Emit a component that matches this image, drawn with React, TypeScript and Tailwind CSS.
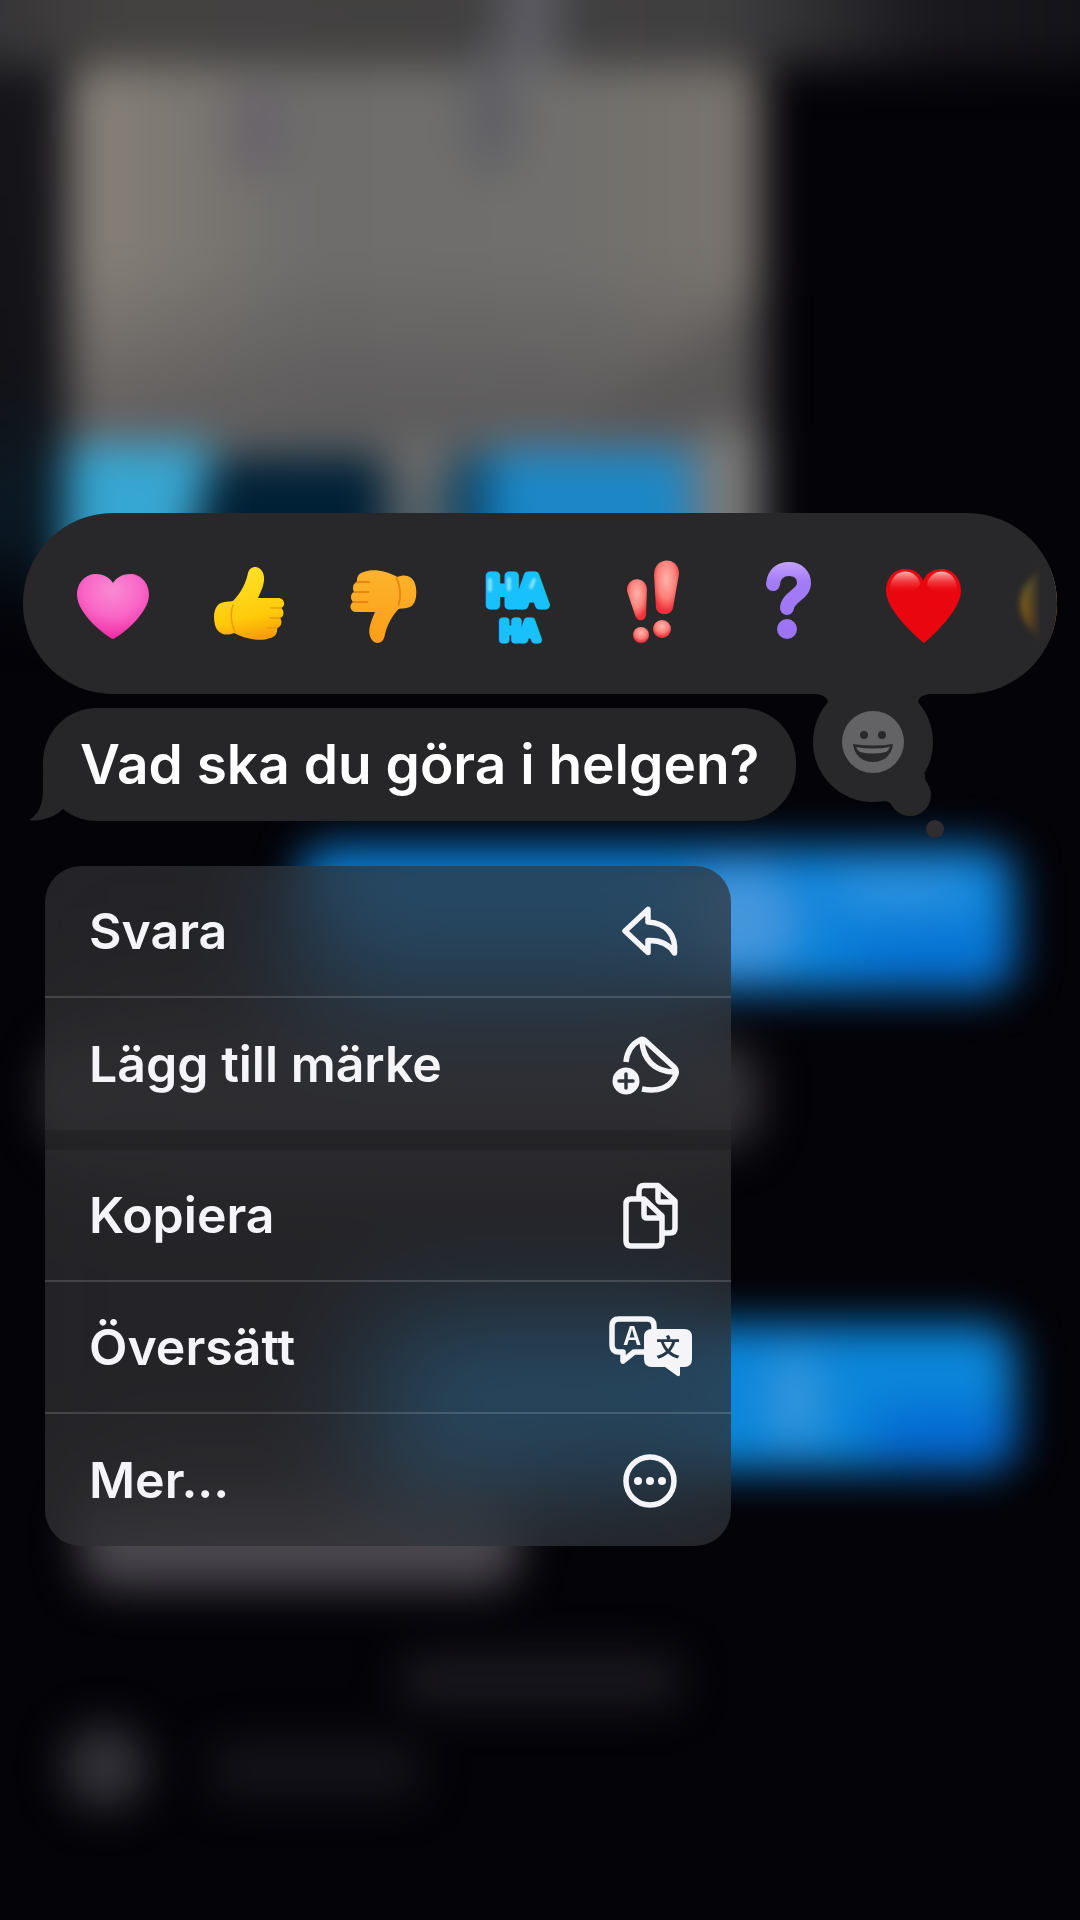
import type { ReactNode } from "react";

const THUMB =
  "M25 37 C34 28 38 18 40 9 C42 2 50 1 54 7 C59 15 54 25 50 34 L70 34 C77 34 78 42 73 44 C77 47 76 53 72 54 C75 58 73 63 69 64 C70 69 67 73 62 74 C52 78 38 75 26 69 C17 73 9 69 7 61 C5 53 6 44 11 40 C16 37 21 38 25 37 Z";

const HEART =
  "M40 75 C34 73 4 50 4 31 C4 18 13 10 23 10 C31 10 37 14 40 19 C43 14 49 10 57 10 C67 10 76 18 76 31 C76 50 46 73 40 75 Z";

function Emoji({ children }: { children: ReactNode }) {
  return (
    <svg viewBox="0 0 80 80" className="h-20 w-20 overflow-visible" aria-hidden="true">
      {children}
    </svg>
  );
}

const reactions = [
  {
    label: "Rosa hjärta",
    art: (
      <Emoji>
        <defs>
          <radialGradient id="pink" cx="0.5" cy="0.25" r="0.8">
            <stop offset="0" stopColor="#f98ad2" />
            <stop offset="0.5" stopColor="#f966c6" />
            <stop offset="1" stopColor="#f2209f" />
          </radialGradient>
        </defs>
        <path d={HEART} fill="url(#pink)" />
      </Emoji>
    ),
  },
  {
    label: "Tumme upp",
    art: (
      <Emoji>
        <defs>
          <linearGradient id="up" x1="0.3" y1="0" x2="0.5" y2="1">
            <stop offset="0" stopColor="#ffe22a" />
            <stop offset="0.7" stopColor="#ffcb0a" />
            <stop offset="1" stopColor="#f99d08" />
          </linearGradient>
        </defs>
        <path d={THUMB} fill="url(#up)" />
        <path
          d="M73 44 H63 M72 54 H62 M69 64 H60 M25 41 C22 49 23 60 27 68"
          fill="none"
          stroke="#ee9a0a"
          strokeWidth="1.5"
          strokeLinecap="round"
        />
      </Emoji>
    ),
  },
  {
    label: "Tumme ner",
    art: (
      <Emoji>
        <defs>
          <linearGradient id="down" x1="0.5" y1="0" x2="0.5" y2="1">
            <stop offset="0" stopColor="#fd9d18" />
            <stop offset="1" stopColor="#fcb42c" />
          </linearGradient>
        </defs>
        <g transform="translate(79 82) rotate(180) scale(0.94 1)">
          <path d={THUMB} fill="url(#down)" />
          <path
            d="M73 44 H58 M72 54 H57 M69 64 H56 M25 41 C22 49 23 60 27 68"
            fill="none"
            stroke="#e8860f"
            strokeWidth="2"
            strokeLinecap="round"
          />
        </g>
      </Emoji>
    ),
  },
  {
    label: "Haha",
    art: (
      <Emoji>
        <g
          fill="#25c8fe"
          stroke="#18c0fc"
          strokeLinejoin="round"
          textAnchor="middle"
          className="font-['Inter',sans-serif] font-semibold"
        >
          <text x="39" y="41" fontSize="40" strokeWidth="9">
            HA
          </text>
          <text x="42" y="76" fontSize="26" strokeWidth="7">
            HA
          </text>
        </g>
        <path
          d="M12 16 V26 M31 15 V25 M56 16 L53 23"
          stroke="#7be3ff"
          strokeWidth="4"
          strokeLinecap="round"
          className="blur-[1px]"
        />
      </Emoji>
    ),
  },
  {
    label: "Utropstecken",
    art: (
      <Emoji>
        <defs>
          <radialGradient id="bang" cx="0.5" cy="0.35" r="0.6">
            <stop offset="0" stopColor="#ffb3ad" />
            <stop offset="0.6" stopColor="#fb8079" />
            <stop offset="1" stopColor="#ef3038" />
          </radialGradient>
        </defs>
        <g fill="url(#bang)">
          <path d="M14 27 C13 12 34 11 34 26 L33 51 C32 58 24 58 22 51 Z" />
          <path d="M41 11 C41 -8 66 -8 66 10 L60 44 C58 52 45 52 43 44 Z" />
          <circle cx="28" cy="71" r="8" />
          <circle cx="49" cy="65" r="9" />
        </g>
      </Emoji>
    ),
  },
  {
    label: "Frågetecken",
    art: (
      <Emoji>
        <defs>
          <linearGradient id="ask" gradientUnits="userSpaceOnUse" x1="0" y1="-2" x2="0" y2="76">
            <stop offset="0" stopColor="#c3a2fb" />
            <stop offset="0.25" stopColor="#a47bf6" />
            <stop offset="1" stopColor="#9c72f6" />
          </linearGradient>
        </defs>
        <path
          d="M25 20 C26 9 33 5 41 5 C50 5 56 11 56 19 C56 31 40 32 39 44"
          fill="none"
          stroke="url(#ask)"
          strokeWidth="14"
          strokeLinecap="round"
        />
        <circle cx="39" cy="65" r="10" fill="url(#ask)" />
      </Emoji>
    ),
  },
  {
    label: "Rött hjärta",
    art: (
      <Emoji>
        <defs>
          <linearGradient id="shine" x1="0" y1="0" x2="0" y2="1">
            <stop offset="0" stopColor="#ffb5b5" />
            <stop offset="1" stopColor="#f0141c" stopOpacity="0" />
          </linearGradient>
        </defs>
        <path
          d="M41 79 C37 76 3 47 3 27 C3 13 12 5 22 5 C31 5 37 9 40 17 C43 9 50 5 58 5 C69 5 78 13 78 27 C78 47 45 76 41 79 Z"
          fill="#e9060f"
        />
        <path d="M7 26 C7 3 33 2 37 20 C36 29 8 32 7 26 Z" fill="url(#shine)" />
        <path d="M44 20 C48 2 74 3 74 26 C73 32 45 29 44 20 Z" fill="url(#shine)" />
      </Emoji>
    ),
  },
  {
    label: "Fler reaktioner",
    art: (
      <Emoji>
        <defs>
          <linearGradient id="peek" x1="0" y1="0" x2="0" y2="1">
            <stop offset="0" stopColor="#8f8a2c" />
            <stop offset="0.6" stopColor="#c07c0c" />
            <stop offset="1" stopColor="#8a560e" />
          </linearGradient>
        </defs>
        <circle cx="40" cy="40" r="37" fill="url(#peek)" className="blur-[3px]" />
      </Emoji>
    ),
  },
];

function MenuIcon({ children }: { children: ReactNode }) {
  return (
    <svg
      viewBox="0 0 84 84"
      className="h-[84px] w-[84px] flex-none overflow-visible"
      fill="none"
      stroke="currentColor"
      strokeWidth="5.5"
      strokeLinecap="round"
      strokeLinejoin="round"
      aria-hidden="true"
    >
      {children}
    </svg>
  );
}

const groups = [
  [
    {
      label: "Svara",
      icon: (
        <MenuIcon>
          <path d="M18 42 L41 20.5 V33 C60 34 69 46 67.5 64 C62 55 54 51 41 51.5 V63.5 Z" />
        </MenuIcon>
      ),
    },
    {
      label: "Lägg till märke",
      icon: (
        <MenuIcon>
          <path
            d="M19 40 C20 30 25 22 33 18 Q35.5 16.5 38 18.5 L67 45 Q70 48 69 52 C64 66 51 70 35 67"
            strokeLinecap="butt"
          />
          <path d="M35 19 C36 37 47 50 68 50" />
          <circle cx="19" cy="59" r="13.5" fill="currentColor" stroke="none" />
          <path d="M12 59 H26 M19 52 V66" stroke="#2f343c" strokeWidth="3.5" />
        </MenuIcon>
      ),
    },
  ],
  [
    {
      label: "Kopiera",
      icon: (
        <MenuIcon>
          <path d="M24 26 H37 L55 43 V68 Q55 73 50 73 H24 Q19 73 19 68 V31 Q19 26 24 26 Z" />
          <path d="M37 27 V42 Q37 45 40 45 H54" />
          <path d="M32 24 V18 Q32 12.5 37 12.5 H51 L68 28 V55 Q68 60 63 60 H57" />
          <path d="M51 14 V26 Q51 29 54 29 H67" />
        </MenuIcon>
      ),
    },
    {
      label: "Översätt",
      icon: (
        <MenuIcon>
          <path d="M38 47 H27 L16 56 V47 H12 Q5 47 5 40 V21 Q5 14 12 14 H40 Q47 14 47 21 V26" />
          <path
            d="M45 24 H77 Q85 24 85 32 V54 Q85 62 77 62 H73 V69 Q73 73 69 70 L58 62 H45 Q37 62 37 54 V32 Q37 24 45 24 Z"
            fill="currentColor"
            stroke="none"
          />
          <text
            x="25"
            y="40"
            fontSize="25"
            textAnchor="middle"
            fill="currentColor"
            stroke="none"
            className="font-['Inter',sans-serif] font-semibold"
          >
            A
          </text>
          <text
            x="61"
            y="51"
            fontSize="24"
            textAnchor="middle"
            fill="#26384a"
            stroke="none"
            className="font-['Noto_Sans_CJK_SC',sans-serif] font-bold"
          >
            文
          </text>
        </MenuIcon>
      ),
    },
    {
      label: "Mer...",
      icon: (
        <MenuIcon>
          <circle cx="43" cy="43" r="24" />
          <g fill="currentColor" stroke="none">
            <circle cx="31" cy="43" r="4" />
            <circle cx="43" cy="43" r="4" />
            <circle cx="55" cy="43" r="4" />
          </g>
        </MenuIcon>
      ),
    },
  ],
];

// The conversation behind the menu, out of focus
function BlurredChat() {
  return (
    <svg
      viewBox="0 0 1080 1920"
      preserveAspectRatio="none"
      className="absolute inset-0 h-full w-full"
      aria-hidden="true"
    >
      <defs>
        <filter
          id="soft"
          filterUnits="userSpaceOnUse"
          x="-100"
          y="-100"
          width="1280"
          height="2120"
          colorInterpolationFilters="sRGB"
        >
          <feGaussianBlur stdDeviation="22" />
        </filter>
        <linearGradient id="header" x1="0" y1="0" x2="1" y2="0">
          <stop offset="0" stopColor="#302f32" />
          <stop offset="0.15" stopColor="#444241" />
          <stop offset="0.65" stopColor="#403f40" />
          <stop offset="0.82" stopColor="#1a191e" />
          <stop offset="1" stopColor="#121117" />
        </linearGradient>
        <linearGradient id="photo" x1="0" y1="0" x2="1" y2="0">
          <stop offset="0" stopColor="#8a837b" />
          <stop offset="0.12" stopColor="#7f7a74" />
          <stop offset="0.35" stopColor="#6e6d6b" />
          <stop offset="0.7" stopColor="#706f6d" />
          <stop offset="1" stopColor="#7a746e" />
        </linearGradient>
        <linearGradient id="shade" x1="0" y1="0" x2="0" y2="1">
          <stop offset="0" stopColor="#555355" stopOpacity="0" />
          <stop offset="1" stopColor="#555355" stopOpacity="0.8" />
        </linearGradient>
        <linearGradient id="edge" x1="0" y1="0" x2="0" y2="1">
          <stop offset="0" stopColor="#17161b" />
          <stop offset="0.65" stopColor="#121217" />
          <stop offset="0.85" stopColor="#0a1a26" />
          <stop offset="1" stopColor="#040308" />
        </linearGradient>
      </defs>
      <g filter="url(#soft)">
        <rect x="-60" y="-60" width="130" height="680" fill="url(#edge)" />
        <rect x="-60" y="-60" width="1200" height="126" fill="url(#header)" />
        <rect x="500" y="-60" width="60" height="126" fill="#5c5c63" />
        <rect x="68" y="66" width="695" height="556" rx="20" fill="url(#photo)" />
        <ellipse cx="258" cy="130" rx="30" ry="50" fill="#68636a" />
        <ellipse cx="492" cy="110" rx="28" ry="65" fill="#5f5f65" />
        <path d="M763 290 L560 440 H763 Z" fill="#605c5a" />
        <rect x="68" y="260" width="695" height="180" fill="url(#shade)" />
        <path d="M66 444 H215 L165 622 H66 Z" fill="#36a6d2" />
        <path d="M215 455 H385 V622 H170 Z" fill="#002036" />
        <rect x="385" y="480" width="60" height="142" fill="#586268" />
        <path d="M450 455 H490 V622 H450 Z" fill="#063f62" />
        <rect x="488" y="450" width="205" height="172" fill="#1b87c6" />
        <rect x="704" y="430" width="59" height="192" fill="#7c7c7a" />
        <rect x="300" y="847" width="714" height="144" rx="30" fill="#0c82da" />
        <ellipse cx="740" cy="920" rx="60" ry="55" fill="#4496dc" />
        <ellipse cx="900" cy="890" rx="80" ry="18" fill="#3494de" />
        <ellipse cx="930" cy="955" rx="90" ry="18" fill="#046cd2" />
        <rect x="45" y="1040" width="715" height="110" rx="40" fill="#343338" />
        <rect x="375" y="1324" width="640" height="146" rx="30" fill="#0b86da" />
        <ellipse cx="795" cy="1400" rx="28" ry="50" fill="#3696dc" />
        <ellipse cx="940" cy="1435" rx="80" ry="28" fill="#0468d2" />
        <rect x="80" y="1490" width="438" height="98" rx="30" fill="#4a484e" />
        <rect x="400" y="1655" width="280" height="50" rx="20" fill="#1b1a20" />
        <circle cx="105" cy="1767" r="42" fill="#343339" />
        <rect x="210" y="1742" width="210" height="56" rx="20" fill="#15141a" />
      </g>
    </svg>
  );
}

function EmojiPickerButton() {
  return (
    <button
      type="button"
      aria-label="Välj emoji"
      className="absolute top-[169px] right-[107px] h-[160px] w-[150px]"
    >
      <svg viewBox="0 0 150 160" className="h-full w-full" aria-hidden="true">
        <g fill="#28282a">
          <path d="M16 12 Q27 13 28 20 L40 40 H105 L118 20 Q119 13 130 12 Z" />
          <circle cx="73" cy="60" r="60" />
          <circle cx="110" cy="113" r="21" />
          <path d="M84 119 Q90 119 94 126 L112 118 L128 102 Q124 98 125 92 L104 92 Z" />
        </g>
        <circle cx="135" cy="147" r="9" fill="#302c30" />
        <circle cx="73" cy="60" r="31" fill="#636365" />
        <g fill="#29292b">
          <circle cx="64" cy="53" r="4" />
          <circle cx="82" cy="53" r="4" />
          <path d="M53 62 Q73 65 93 62 C92 72 85 80 73 80 C61 80 54 72 53 62 Z" />
        </g>
        <path d="M56 65 Q73 68 90 65 Q89 68 86 70 Q73 73 60 70 Q57 68 56 65 Z" fill="#6c6c6e" />
      </svg>
    </button>
  );
}

export default function App() {
  return (
    <main className="relative min-h-screen overflow-hidden bg-[#040308] px-[23px] pt-[513px] pb-16 font-['Inter','Liberation_Sans',sans-serif] text-[#f5f5f9]">
      <BlurredChat />

      {/* Tapback bar */}
      <div className="relative">
        <div className="relative flex h-[181px] items-center overflow-hidden rounded-[90px] bg-[#28282a] pl-[22px]">
          {reactions.map((reaction) => (
            <button
              key={reaction.label}
              type="button"
              aria-label={reaction.label}
              className="flex h-full w-[135px] flex-none items-center justify-center"
            >
              {reaction.art}
            </button>
          ))}
          <div className="pointer-events-none absolute inset-y-0 right-0 w-10 bg-linear-to-r from-[#28282a]/20 via-[#28282a] via-60% to-[#28282a]" />
        </div>
        <EmojiPickerButton />
      </div>

      {/* Selected message */}
      <div className="relative mt-3.5 ml-5 flex h-[113px] w-fit items-center rounded-[54px] bg-[#262628] px-[37px]">
        <svg
          viewBox="0 0 60 50"
          className="absolute bottom-0 -left-3.5 h-[50px] w-[60px]"
          aria-hidden="true"
        >
          <path d="M14 0 V18 C14 33 10 43 0 49 C12 51 26 46 34 38 L60 50 V0 Z" fill="#262628" />
          <path d="M34 38 Q42 48 54 50 H22 Q30 45 34 38 Z" fill="#040308" />
        </svg>
        <p className="relative text-[55px] leading-none font-semibold whitespace-nowrap text-white">
          Vad ska du göra i helgen?
        </p>
      </div>

      {/* Context menu */}
      <div
        role="menu"
        className="relative mt-[45px] ml-[22px] w-[686px] max-w-full overflow-hidden rounded-[36px] bg-[#323234]/70 backdrop-blur-[56px]"
      >
        {groups.map((items, i) => (
          <div
            key={i}
            role="group"
            className="divide-y-2 divide-white/15 not-first:border-t-[20px] not-first:border-black/15"
          >
            {items.map((item) => (
              <button
                key={item.label}
                type="button"
                role="menuitem"
                className="flex h-[132px] w-full items-center justify-between pr-10 pl-11 text-left text-[50px] font-semibold"
              >
                {item.label}
                {item.icon}
              </button>
            ))}
          </div>
        ))}
      </div>
    </main>
  );
}
